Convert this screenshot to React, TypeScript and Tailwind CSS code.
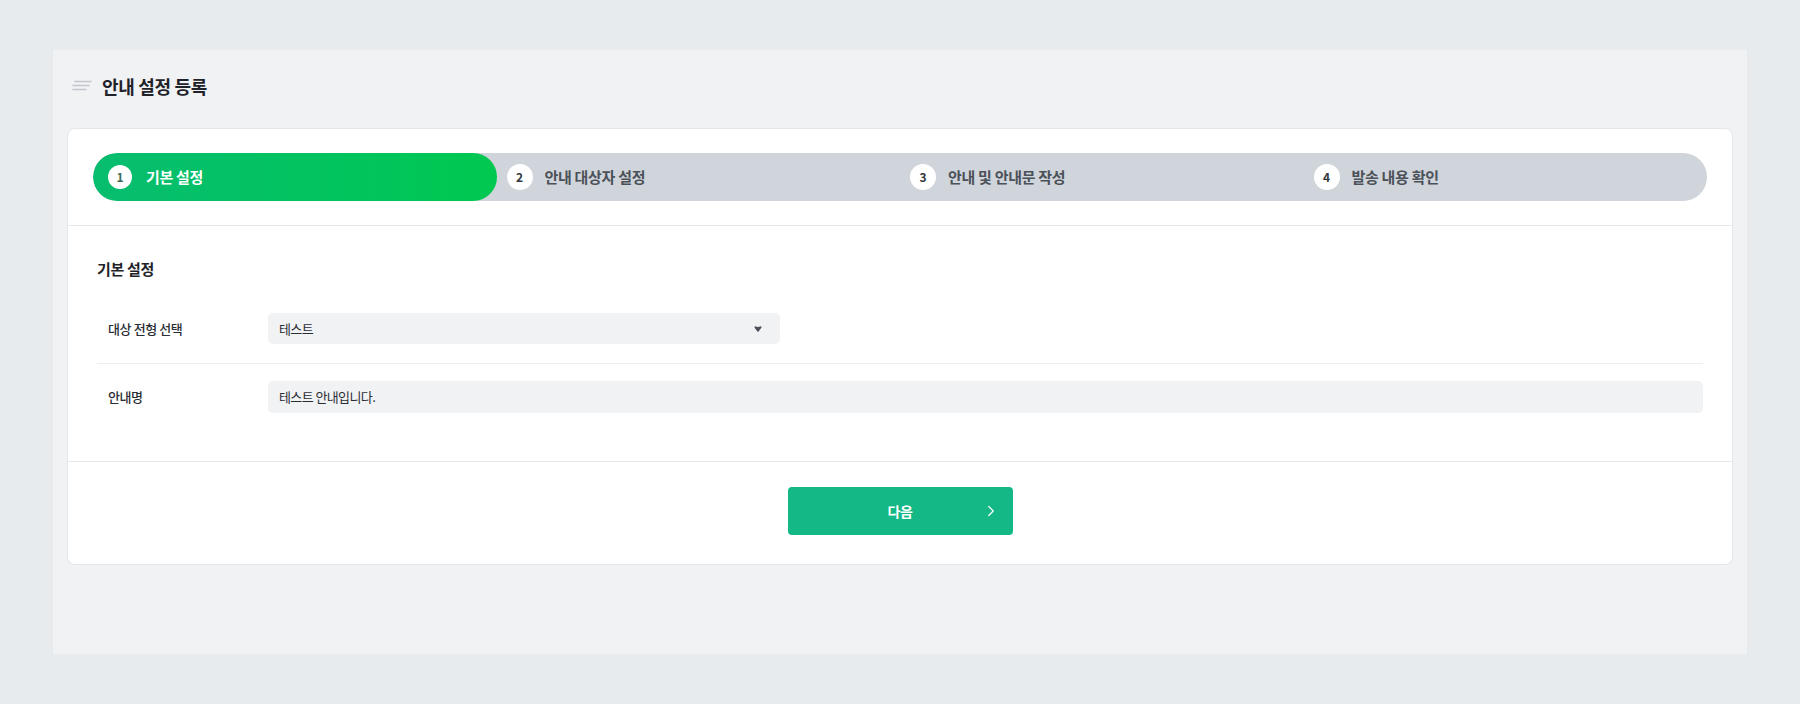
import { ChevronRight } from "lucide-react";

const steps = ["기본 설정", "안내 대상자 설정", "안내 및 안내문 작성", "발송 내용 확인"];

function TitleIcon() {
  return (
    <svg width="20" height="12" viewBox="0 0 20 12" className="shrink-0">
      <line x1="3" y1="1.5" x2="19" y2="1.5" stroke="#c3c7cd" strokeWidth="1.6" strokeLinecap="round" />
      <line x1="1" y1="5.5" x2="17" y2="5.5" stroke="#c3c7cd" strokeWidth="1.6" strokeLinecap="round" />
      <line x1="1" y1="9.5" x2="14" y2="9.5" stroke="#c3c7cd" strokeWidth="1.6" strokeLinecap="round" />
    </svg>
  );
}

function Caret() {
  return (
    <svg width="8" height="6" viewBox="0 0 8 6">
      <path d="M0.5 1.4 Q0.5 0.1 1.8 0.4 L4 1.1 L6.2 0.4 Q7.5 0.1 7.5 1.4 L4.6 5.4 Q4 6 3.4 5.4 Z" fill="#4b5058" />
    </svg>
  );
}

export default function App() {
  return (
    <div
      className="min-h-screen bg-[#e8ebee] px-[53px] pt-[50px] pb-[50px]"
      style={{ fontFamily: '"Noto Sans CJK KR", "Noto Sans", Roboto, sans-serif' }}
    >
      <div className="bg-[#f0f2f4] px-[14px] pt-[26px] pb-[89px]">
        <div className="flex items-center gap-[10px] pl-[5px] h-[20px] mb-[32px]">
          <TitleIcon />
          <h1 className="text-[18px] font-bold tracking-[-0.3px] text-[#1f2329] leading-[20px]">안내 설정 등록</h1>
        </div>

        <div className="bg-white border border-[#e3e6ea] rounded-[8px]">
          <div className="px-[25px] py-[24px] border-b border-[#e6e8eb]">
            <div className="grid grid-cols-4 h-[48px] bg-[#d0d4db] rounded-full overflow-hidden">
              {steps.map((s, i) => (
                <div
                  key={s}
                  className={
                    i === 0
                      ? "flex items-center gap-[14px] pl-[15px] rounded-full bg-gradient-to-r from-[#07bd6f] to-[#00c850]"
                      : "flex items-center gap-[12px] pl-[10px]"
                  }
                >
                  <span
                    className={
                      i === 0
                        ? "w-[24px] h-[24px] rounded-full bg-white flex items-center justify-center text-[12px] font-bold text-[#3f6b55]"
                        : "w-[26px] h-[26px] rounded-full bg-white flex items-center justify-center text-[12px] font-bold text-[#33373d]"
                    }
                  >
                    {i + 1}
                  </span>
                  <span
                    className={
                      i === 0
                        ? "text-[15px] font-bold tracking-[-0.3px] text-white"
                        : "text-[15px] font-semibold tracking-[-0.3px] text-[#4b5159]"
                    }
                  >
                    {s}
                  </span>
                </div>
              ))}
            </div>
          </div>

          <div className="px-[29px] pt-[33px] pb-[30px] border-b border-[#e6e8eb]">
            <h2 className="text-[15px] font-bold tracking-[-0.3px] text-[#1f2329] leading-[20px] mb-[16px]">기본 설정</h2>

            <div className="grid grid-cols-[171px_1fr] items-center pt-[18px] pb-[19px] border-b border-[#eceef0]">
              <span className="pl-[11px] text-[13px] font-medium tracking-[-0.4px] text-[#2a2e34]">대상 전형 선택</span>
              <div className="w-[512px] h-[31px] bg-[#f1f2f4] rounded-[5px] flex items-center justify-between pl-[11px] pr-[18px]">
                <span className="text-[13px] tracking-[-0.6px] text-[#2a2e34]">테스트</span>
                <Caret />
              </div>
            </div>

            <div className="grid grid-cols-[171px_1fr] items-center pt-[17px] pb-[18px]">
              <span className="pl-[11px] text-[13px] font-medium tracking-[-0.4px] text-[#2a2e34]">안내명</span>
              <div className="h-[32px] bg-[#f1f2f4] rounded-[5px] flex items-center pl-[11px]">
                <span className="text-[13px] tracking-[-0.6px] text-[#2a2e34]">테스트 안내입니다.</span>
              </div>
            </div>
          </div>

          <div className="flex justify-center pt-[25px] pb-[29px]">
            <button className="relative w-[225px] h-[48px] rounded-[4px] bg-[#13b886] flex items-center justify-center text-white">
              <span className="text-[14px] font-bold tracking-[-0.3px]">다음</span>
              <ChevronRight className="absolute right-[13px] top-1/2 -translate-y-1/2" size={18} strokeWidth={1.6} />
            </button>
          </div>
        </div>
      </div>
    </div>
  );
}
